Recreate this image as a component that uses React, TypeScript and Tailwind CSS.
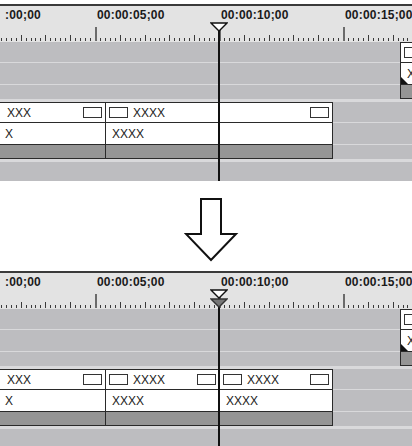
import React from 'react';

type ClipData = {
  left: number;
  width: number;
  title?: string;
  sub?: string;
  leftBox?: boolean;
  rightBox?: boolean;
  titlePad?: number;
  subPad?: number;
  marker?: boolean;
};

// first label is scrolled off to the left, only its tail shows
const labels = [
  { x: 5, text: ':00;00' },
  { x: 97, text: '00:00:05;00' },
  { x: 221, text: '00:00:10;00' },
  { x: 345, text: '00:00:15;00' },
];

// ticks: 5 per second, ~24.8px per second
const ticks = Array.from({ length: 90 }, (_, n) => {
  const i = n - 25;
  const x = Math.round(95 + i * 4.96);
  const major = i % 25 === 0;
  const sec = i % 5 === 0;
  return { x, h: major ? 14 : sec ? 6 : 3, major };
});

function Box() {
  return <div className="w-[19px] h-[11px] shrink-0 border border-[#333] bg-white" />;
}

function Clip({ c }: { c: ClipData }) {
  return (
    <div
      className="absolute top-0 h-[57px] flex flex-col border border-[#2a2a2a] bg-white overflow-hidden"
      style={{ left: c.left, width: c.width }}
    >
      <div className="h-[20px] flex items-center border-b border-[#2a2a2a] px-[3px]">
        {c.leftBox && <Box />}
        {c.title && (
          <span className="whitespace-nowrap" style={{ paddingLeft: c.titlePad ?? 5 }}>
            {c.title}
          </span>
        )}
        {c.rightBox && (
          <div className="ml-auto">
            <Box />
          </div>
        )}
      </div>
      <div className="relative h-[22px] flex items-center border-b border-[#2a2a2a]">
        {c.sub && (
          <span className="whitespace-nowrap" style={{ paddingLeft: c.subPad ?? 6 }}>
            {c.sub}
          </span>
        )}
        {c.marker && (
          <svg className="absolute left-0 bottom-0" width="7" height="7" viewBox="0 0 7 7">
            <polygon points="0,0 0,7 7,7" fill="#111" />
          </svg>
        )}
      </div>
      <div className="flex-1 bg-[#959595]" />
    </div>
  );
}

function Lane({ clips, last }: { clips: ClipData[]; last?: boolean }) {
  return (
    <div className={`relative ${last ? 'flex-1' : 'h-[57px]'} flex flex-col shrink-0`}>
      <div className="h-[21px] shrink-0 border-b border-[#d9d9db]" />
      <div className="h-[22px] shrink-0 border-b border-[#d9d9db]" />
      <div className="flex-1" />
      {clips.map((c, i) => (
        <Clip key={i} c={c} />
      ))}
    </div>
  );
}

function Panel({ split }: { split: boolean }) {
  const lane2: ClipData[] = split
    ? [
        { left: -30, width: 136, title: 'XXX', sub: 'X', titlePad: 33, subPad: 34, rightBox: true },
        { left: 105, width: 115, title: 'XXXX', sub: 'XXXX', leftBox: true, rightBox: true },
        { left: 219, width: 114, title: 'XXXX', sub: 'XXXX', leftBox: true, rightBox: true },
      ]
    : [
        { left: -30, width: 136, title: 'XXX', sub: 'X', titlePad: 33, subPad: 34, rightBox: true },
        { left: 105, width: 228, title: 'XXXX', sub: 'XXXX', leftBox: true, rightBox: true },
      ];

  return (
    <div className="relative h-[177px] w-[412px] shrink-0 overflow-hidden border-t-2 border-[#3a3a3a] flex flex-col bg-[#bdbdc0] text-[12px] leading-none text-[#222]">
      {/* ruler */}
      <div className="relative h-[36px] shrink-0 bg-[#e3e3e3]">
        {labels.map((l) => (
          <span
            key={l.text}
            className="absolute top-[3px] whitespace-nowrap font-bold text-[12px] leading-[12px] tracking-[0.2px] text-[#1a1a1a]"
            style={{ left: l.x }}
          >
            {l.text}
          </span>
        ))}
        <svg className="absolute left-0 top-0" width="412" height="36" shapeRendering="crispEdges">
          {ticks.map((t, i) => (
            <rect
              key={i}
              x={t.x}
              y={35 - t.h}
              width={t.major ? 2 : 1}
              height={t.h}
              fill={t.major ? '#6b6b6b' : '#3a3a3a'}
            />
          ))}
        </svg>
      </div>

      <Lane
        clips={[{ left: 400, width: 40, sub: 'X', subPad: 6, leftBox: true, marker: true }]}
      />
      <div className="h-[3px] shrink-0 bg-[#d9d9db]" />
      <Lane clips={lane2} />
      <div className="h-[3px] shrink-0 bg-[#d9d9db]" />
      <Lane clips={[]} last />

      {/* playhead */}
      <div className="absolute left-[218px] top-[25px] bottom-0 w-[2px] bg-[#111]" />
      <svg className="absolute left-[210px] top-[16px]" width="18" height="10" viewBox="0 0 18 10">
        <polygon points="1,1 17,1 9,9" fill="#fff" stroke="#111" strokeWidth="1.3" strokeLinejoin="miter" />
      </svg>
      {split && (
        <svg className="absolute left-[210px] top-[25px]" width="18" height="10" viewBox="0 0 18 10">
          <polygon points="1,1 17,1 9,9" fill="#777" stroke="#333" strokeWidth="1.3" />
        </svg>
      )}
    </div>
  );
}

export default function App() {
  return (
    <div className="w-[412px] h-[446px] overflow-hidden bg-white pt-[4px] flex flex-col font-['Liberation_Sans',Arial,sans-serif]">
      <Panel split={false} />
      <div className="h-[90px] shrink-0 pl-[184px] pt-[16px]">
        <svg width="56" height="66" viewBox="0 0 56 66">
          <polygon
            points="17,2 37,2 37,37 52,37 27,63 2,37 17,37"
            fill="#fff"
            stroke="#111"
            strokeWidth="2"
            strokeLinejoin="miter"
          />
        </svg>
      </div>
      <Panel split />
    </div>
  );
}
